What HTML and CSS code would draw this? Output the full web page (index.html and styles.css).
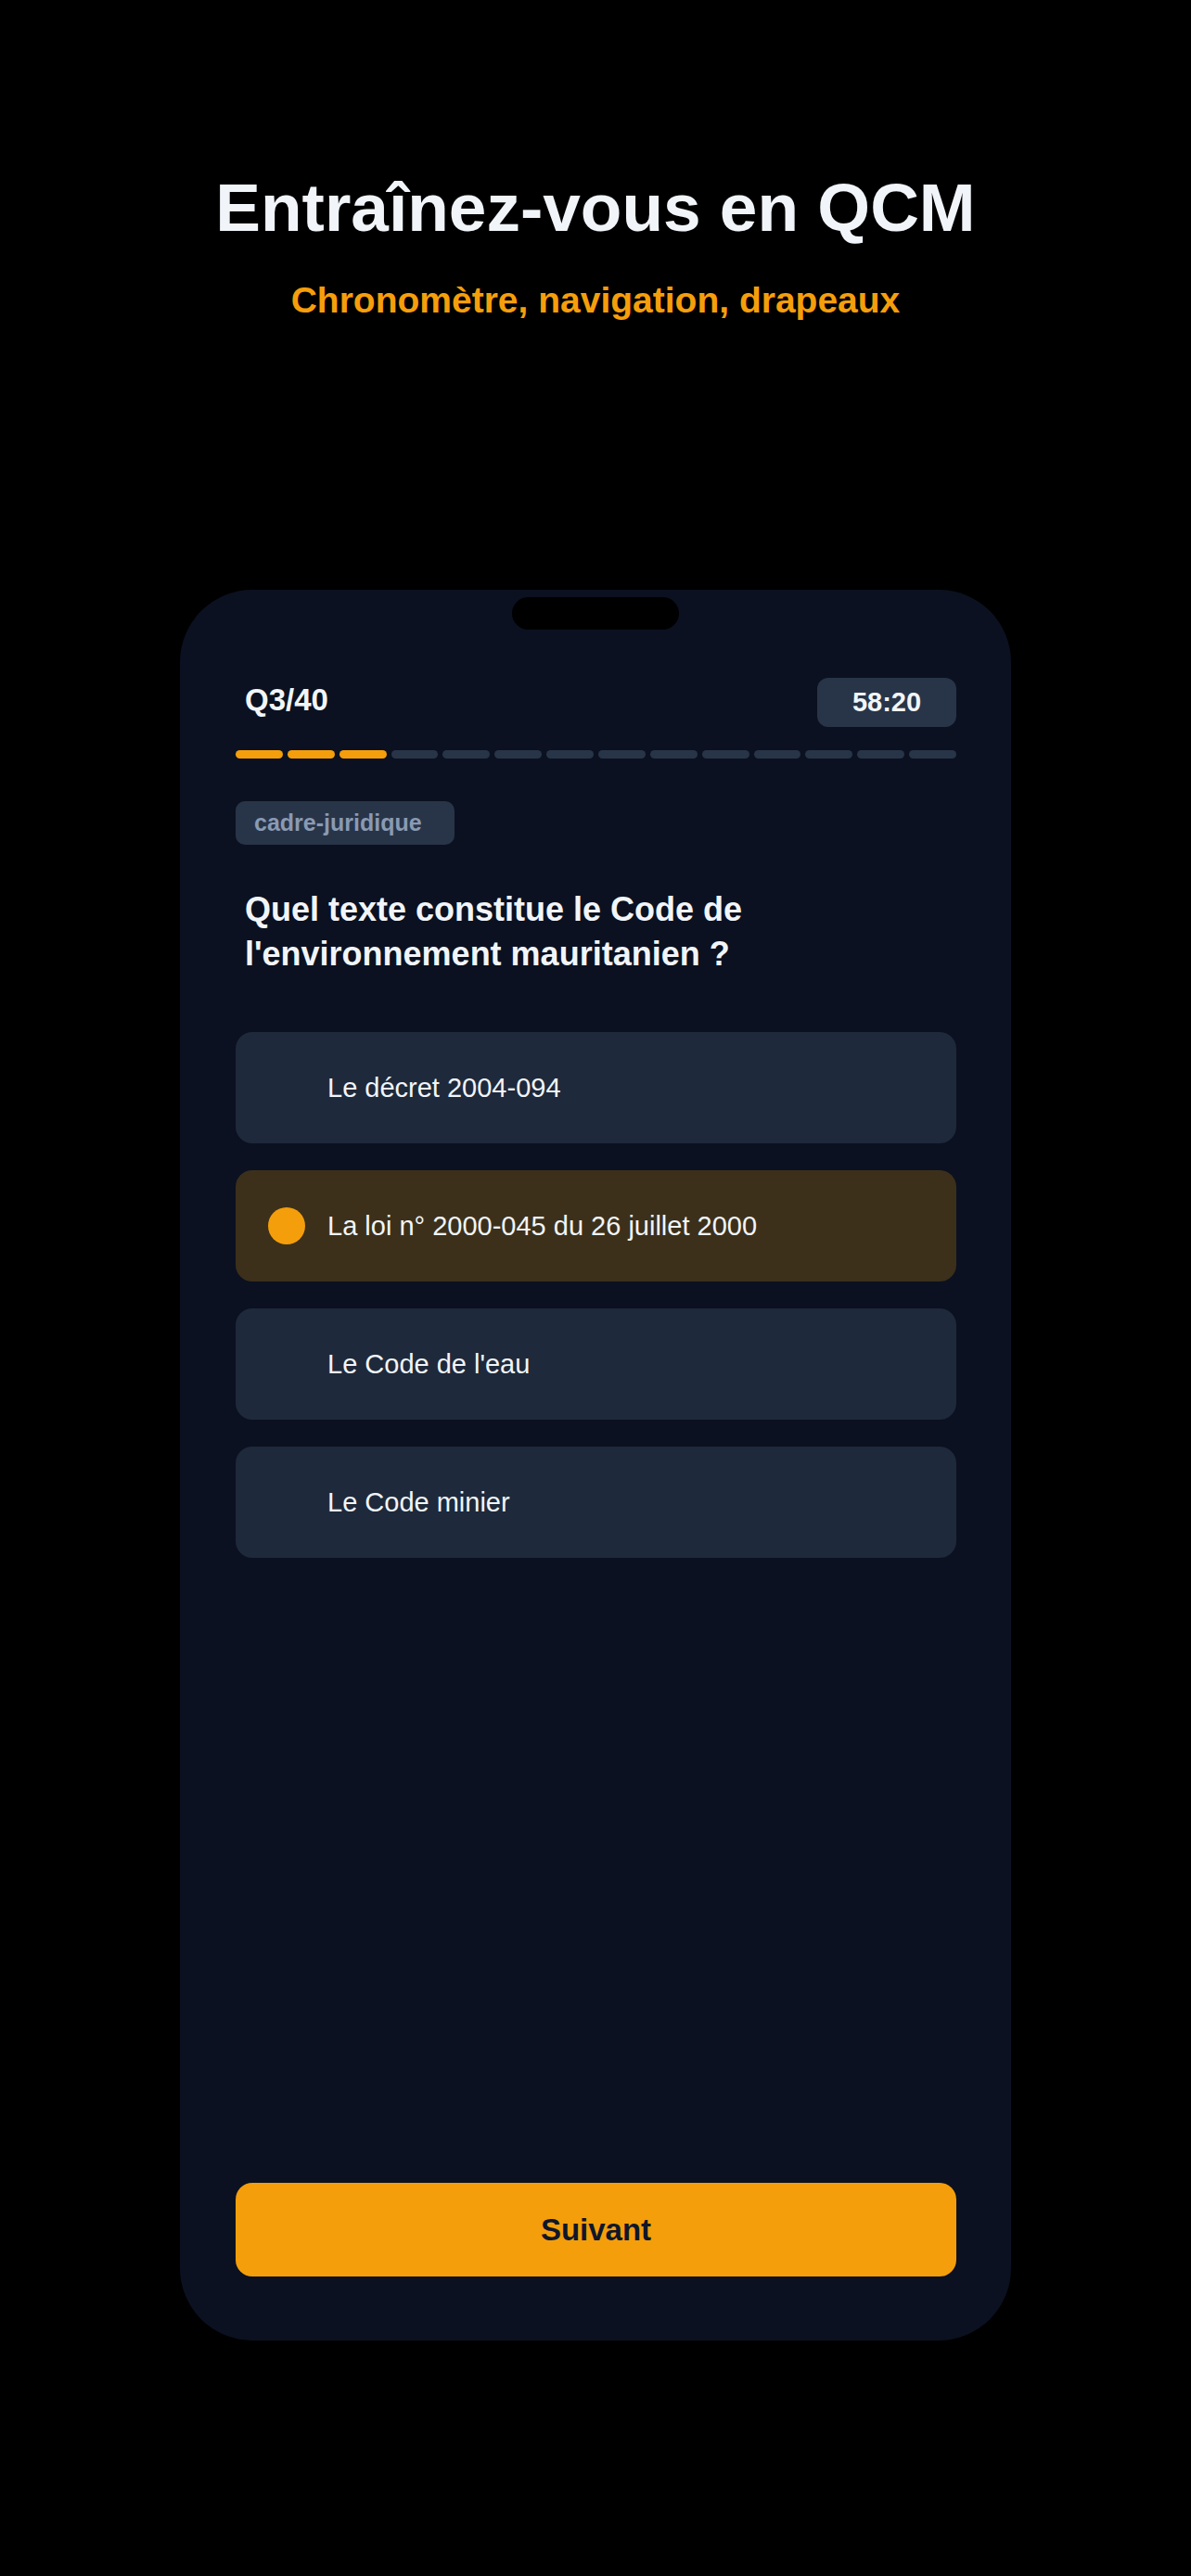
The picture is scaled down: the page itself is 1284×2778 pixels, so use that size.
FILE: index.html
```html
<!DOCTYPE html>
<html lang="fr">
<head>
  <meta charset="UTF-8">
  <meta name="viewport" content="width=device-width, initial-scale=1.0">
  <title>Entraînez-vous en QCM</title>
  <link rel="stylesheet" href="styles.css">
</head>
<body>

  <!-- Hero -->
  <header class="hero">
    <h1 class="hero-title">Entraînez-vous en QCM</h1>
    <p class="hero-subtitle">Chronomètre, navigation, drapeaux</p>
  </header>

  <!-- Phone -->
  <div class="phone">
    <div class="notch"></div>

    <div class="quiz-header">
      <span class="quiz-count">Q3/40</span>
      <span class="timer">58:20</span>
    </div>

    <div class="progress">
      <span class="step done"></span>
      <span class="step done"></span>
      <span class="step done"></span>
      <span class="step"></span>
      <span class="step"></span>
      <span class="step"></span>
      <span class="step"></span>
      <span class="step"></span>
      <span class="step"></span>
      <span class="step"></span>
      <span class="step"></span>
      <span class="step"></span>
      <span class="step"></span>
      <span class="step"></span>
    </div>

    <span class="tag">cadre-juridique</span>

    <h2 class="question">Quel texte constitue le Code de l'environnement mauritanien ?</h2>

    <ul class="options">
      <li class="option"><span class="radio"></span>Le décret 2004-094</li>
      <li class="option selected"><span class="radio"></span>La loi n° 2000-045 du 26 juillet 2000</li>
      <li class="option"><span class="radio"></span>Le Code de l'eau</li>
      <li class="option"><span class="radio"></span>Le Code minier</li>
    </ul>

    <button class="next-btn">Suivant</button>
  </div>

</body>
</html>
```

FILE: styles.css
```css
body {
  margin: 0;
  background: #000;
  font-family: "Liberation Sans", Arial, sans-serif;
  color: #f1f5f9;
}

.hero {
  padding-top: 187px;
  text-align: center;
}

.hero-title {
  margin: 0;
  font-size: 73px;
  line-height: 1;
  font-weight: 700;
  color: #f1f5f9;
}

.hero-subtitle {
  margin: 44px 0 0;
  font-size: 39px;
  line-height: 1;
  font-weight: 700;
  color: #f59e0b;
}

.phone {
  position: relative;
  box-sizing: border-box;
  width: 896px;
  height: 1888px;
  margin: 293px auto 0;
  padding: 95px 59px 69px 60px;
  background: #0b1120;
  border-radius: 78px;
  display: flex;
  flex-direction: column;
}

.notch {
  position: absolute;
  top: 8px;
  left: 50%;
  width: 180px;
  height: 35px;
  margin-left: -90px;
  background: #000;
  border-radius: 18px;
}

.quiz-header {
  display: flex;
  justify-content: space-between;
  align-items: center;
  height: 53px;
  padding-left: 10px;
}

.quiz-count {
  font-size: 33px;
  line-height: 1;
  font-weight: 700;
  margin-top: -6px;
}

.timer {
  width: 150px;
  height: 53px;
  line-height: 53px;
  text-align: center;
  font-size: 29px;
  font-weight: 700;
  background: #283548;
  border-radius: 12px;
}

.progress {
  display: flex;
  gap: 5px;
  margin-top: 25px;
}

.progress .step {
  flex: 1;
  height: 9px;
  background: #283548;
  border-radius: 5px;
}

.progress .step.done {
  background: #f59e0b;
}

.tag {
  align-self: flex-start;
  margin-top: 46px;
  height: 47px;
  line-height: 47px;
  padding: 0 35px 0 20px;
  font-size: 25px;
  font-weight: 700;
  color: #8a9ab3;
  background: #283548;
  border-radius: 10px;
}

.question {
  margin: 46px 0 0;
  padding: 0 10px;
  font-size: 36px;
  line-height: 48px;
  font-weight: 700;
  color: #f1f5f9;
}

.options {
  list-style: none;
  margin: 60px 0 0;
  padding: 0;
  display: flex;
  flex-direction: column;
  gap: 29px;
}

.option {
  display: flex;
  align-items: center;
  gap: 24px;
  height: 120px;
  padding-left: 35px;
  font-size: 29px;
  background: #1e293b;
  border-radius: 18px;
}

.option .radio {
  width: 40px;
  height: 40px;
  border-radius: 50%;
}

.option.selected {
  background: #3c301b;
}

.option.selected .radio {
  background: #f59e0b;
}

.next-btn {
  margin-top: auto;
  height: 101px;
  border: none;
  border-radius: 18px;
  background: #f59e0b;
  color: #0f172a;
  font-family: inherit;
  font-size: 33px;
  font-weight: 700;
}
```
